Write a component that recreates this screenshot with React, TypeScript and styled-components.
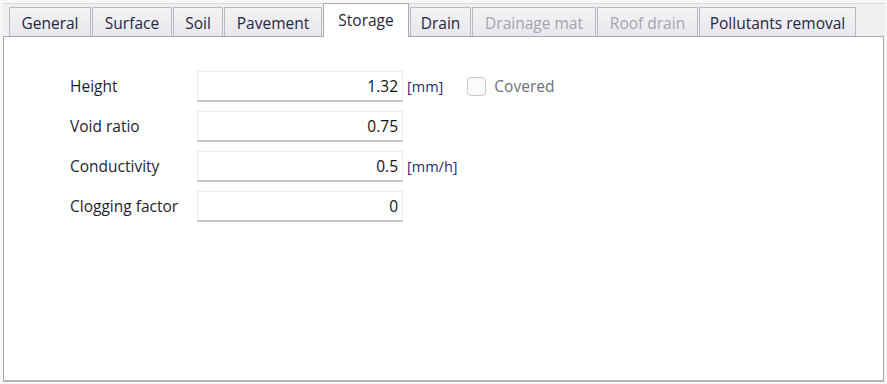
import React from 'react';
import styled, { createGlobalStyle } from 'styled-components';

const GlobalStyle = createGlobalStyle`
  html, body {
    margin: 0;
    padding: 0;
    background: #f7f7f7;
  }
  * {
    box-sizing: border-box;
  }
`;

const Window = styled.div`
  width: 887px;
  height: 384px;
  padding: 3px 2px 2px 3px;
  background: #f7f7f7;
  font-family: 'Open Sans', 'Noto Sans', sans-serif;
  font-size: 15.5px;
`;

const Frame = styled.div`
  height: 100%;
  display: flex;
  flex-direction: column;
  background: #f0f0f0;
  border-top: 1px solid #d9d9dc;
`;

const TabBar = styled.div`
  display: flex;
  align-items: flex-end;
  height: 32px;
  padding-left: 6px;
  gap: 1px;
`;

const Tab = styled.div<{ $active?: boolean; $disabled?: boolean; $w: number }>`
  position: relative;
  display: flex;
  align-items: center;
  justify-content: center;
  width: ${(p) => p.$w}px;
  height: ${(p) => (p.$active ? '34px' : '29px')};
  margin-bottom: ${(p) => (p.$active ? '-1px' : '0')};
  padding-top: ${(p) => (p.$active ? '0' : '1px')};
  padding-bottom: ${(p) => (p.$active ? '1px' : '0')};
  border: 1px solid ${(p) => (p.$active ? '#a9a9b4' : '#b9b9c2')};
  border-bottom: none;
  background: ${(p) =>
    p.$active ? '#ffffff' : 'linear-gradient(#f4f4f6, #e7e7ec)'};
  color: ${(p) => (p.$disabled ? '#a4a4ae' : '#262640')};
  z-index: ${(p) => (p.$active ? 2 : 1)};
  white-space: nowrap;
`;

const Panel = styled.div`
  flex: 1;
  position: relative;
  z-index: 1;
  margin-right: 1px;
  background: #ffffff;
  border: 1px solid #a8a8b4;
  border-bottom: 2px solid #b4b4bc;
  padding: 34px 0 0 66px;
`;

const Form = styled.div`
  display: grid;
  grid-template-columns: 127px 206px auto;
  row-gap: 9px;
  align-items: center;
`;

const Label = styled.div`
  color: #1e1e2e;
  padding-bottom: 2px;
`;

const Field = styled.div`
  height: 31px;
  display: flex;
  align-items: center;
  justify-content: flex-end;
  padding-right: 4px;
  background: #ffffff;
  border: 1px solid #ededf0;
  border-bottom: 2px solid #c4c4c8;
  color: #141414;
`;

const Extra = styled.div`
  display: flex;
  align-items: center;
  padding-left: 4px;
  padding-bottom: 1px;
`;

const Unit = styled.span`
  color: #2a2a6a;
  font-size: 14.5px;
`;

const CheckWrap = styled.label`
  display: flex;
  align-items: center;
  margin-left: 24px;
  gap: 8px;
  color: #707078;
`;

const CheckBox = styled.span`
  width: 19px;
  height: 19px;
  border: 1px solid #c6c6cc;
  border-radius: 4px;
  background: #fbfbfb;
`;

const tabs = [
  { name: 'General', w: 82 },
  { name: 'Surface', w: 80 },
  { name: 'Soil', w: 50 },
  { name: 'Pavement', w: 98 },
  { name: 'Storage', w: 86, active: true },
  { name: 'Drain', w: 61 },
  { name: 'Drainage mat', w: 124, disabled: true },
  { name: 'Roof drain', w: 101, disabled: true },
  { name: 'Pollutants removal', w: 157 },
];

const App: React.FC = () => {
  return (
    <Window>
      <GlobalStyle />
      <Frame>
        <TabBar>
          {tabs.map((t) => (
            <Tab key={t.name} $w={t.w} $active={t.active} $disabled={t.disabled}>
              {t.name}
            </Tab>
          ))}
        </TabBar>
        <Panel>
          <Form>
            <Label>Height</Label>
            <Field>1.32</Field>
            <Extra>
              <Unit>[mm]</Unit>
              <CheckWrap>
                <CheckBox />
                Covered
              </CheckWrap>
            </Extra>

            <Label>Void ratio</Label>
            <Field>0.75</Field>
            <Extra />

            <Label>Conductivity</Label>
            <Field>0.5</Field>
            <Extra>
              <Unit>[mm/h]</Unit>
            </Extra>

            <Label>Clogging factor</Label>
            <Field>0</Field>
            <Extra />
          </Form>
        </Panel>
      </Frame>
    </Window>
  );
};

export default App;
